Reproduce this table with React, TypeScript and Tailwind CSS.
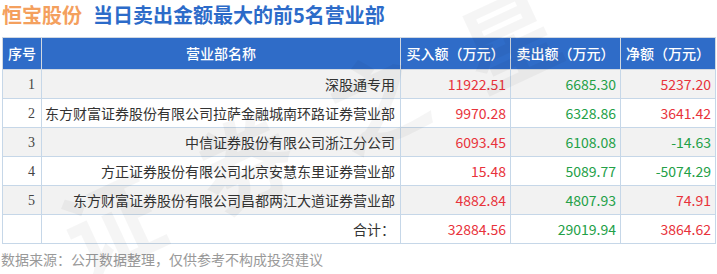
import React from "react";

const rows = [
	{ no: "1", name: "深股通专用", buy: "11922.51", sell: "6685.30", net: "5237.20", up: true },
	{ no: "2", name: "东方财富证券股份有限公司拉萨金融城南环路证券营业部", buy: "9970.28", sell: "6328.86", net: "3641.42", up: true },
	{ no: "3", name: "中信证券股份有限公司浙江分公司", buy: "6093.45", sell: "6108.08", net: "-14.63", up: false },
	{ no: "4", name: "方正证券股份有限公司北京安慧东里证券营业部", buy: "15.48", sell: "5089.77", net: "-5074.29", up: false },
	{ no: "5", name: "东方财富证券股份有限公司昌都两江大道证券营业部", buy: "4882.84", sell: "4807.93", net: "74.91", up: true },
];

function App() {
	return (
		<div className="relative w-[717px] h-[274px] overflow-hidden bg-white font-['Noto_Sans_CJK_SC','Noto_Sans',sans-serif]">
			<div className="pl-[2px] pt-[1px] h-[37px] text-[20px] font-bold leading-[28px] whitespace-nowrap">
				<span className="text-[#f4a05e]">恒宝股份</span>
				<span className="ml-[11px] text-[#2c6bc9]">当日卖出金额最大的前5名营业部</span>
			</div>

			<table className="ml-[2px] w-[713px] table-fixed border-collapse text-[14px] text-[#333]">
				<colgroup>
					<col className="w-[39px]" />
					<col className="w-[359px]" />
					<col className="w-[110px]" />
					<col className="w-[110px]" />
					<col className="w-[95px]" />
				</colgroup>
				<thead>
					<tr className="h-[32px] bg-[#2f6cc8] text-white">
						<th className="border border-[#d0d8e2] font-medium">序号</th>
						<th className="border border-[#d0d8e2] font-medium">营业部名称</th>
						<th className="border border-[#d0d8e2] font-medium">买入额（万元）</th>
						<th className="border border-[#d0d8e2] font-medium">卖出额（万元）</th>
						<th className="border border-[#d0d8e2] font-medium">净额（万元）</th>
					</tr>
				</thead>
				<tbody>
					{rows.map((r, i) => (
						<tr key={r.no} className={`h-[29px] ${i % 2 === 0 ? "bg-[#f2f2f2]" : "bg-white"}`}>
							<td className="border border-[#c6d7e8] pr-[6px] text-right font-['Liberation_Serif',serif] text-[#444]">{r.no}</td>
							<td className="border border-[#c6d7e8] pr-[5px] text-right whitespace-nowrap text-[#333]">{r.name}</td>
							<td className="border border-[#c6d7e8] pr-[4px] text-right text-[#e8323b]">{r.buy}</td>
							<td className="border border-[#c6d7e8] pr-[4px] text-right text-[#23a047]">{r.sell}</td>
							<td className={`border border-[#c6d7e8] pr-[4px] text-right ${r.up ? "text-[#e8323b]" : "text-[#23a047]"}`}>{r.net}</td>
						</tr>
					))}
					<tr className="h-[29px] bg-white">
						<td className="border border-[#c6d7e8]"></td>
						<td className="border border-[#c6d7e8] pr-[5px] text-right text-[#333]">合计：</td>
						<td className="border border-[#c6d7e8] pr-[4px] text-right text-[#e8323b]">32884.56</td>
						<td className="border border-[#c6d7e8] pr-[4px] text-right text-[#23a047]">29019.94</td>
						<td className="border border-[#c6d7e8] pr-[4px] text-right text-[#e8323b]">3864.62</td>
					</tr>
				</tbody>
			</table>

			<div className="mt-[5px] pl-[1px] text-[14px] leading-[20px] text-[#999]">
				数据来源：公开数据整理，仅供参考不构成投资建议
			</div>

			{/* faint watermark over the table */}
			<div className="pointer-events-none absolute left-[40px] top-[70px] -rotate-[25deg] text-[96px] font-bold leading-none text-black/[0.04] whitespace-nowrap tracking-[50px]" aria-hidden="true">
				证券之星
			</div>
		</div>
	);
}

export default App;
